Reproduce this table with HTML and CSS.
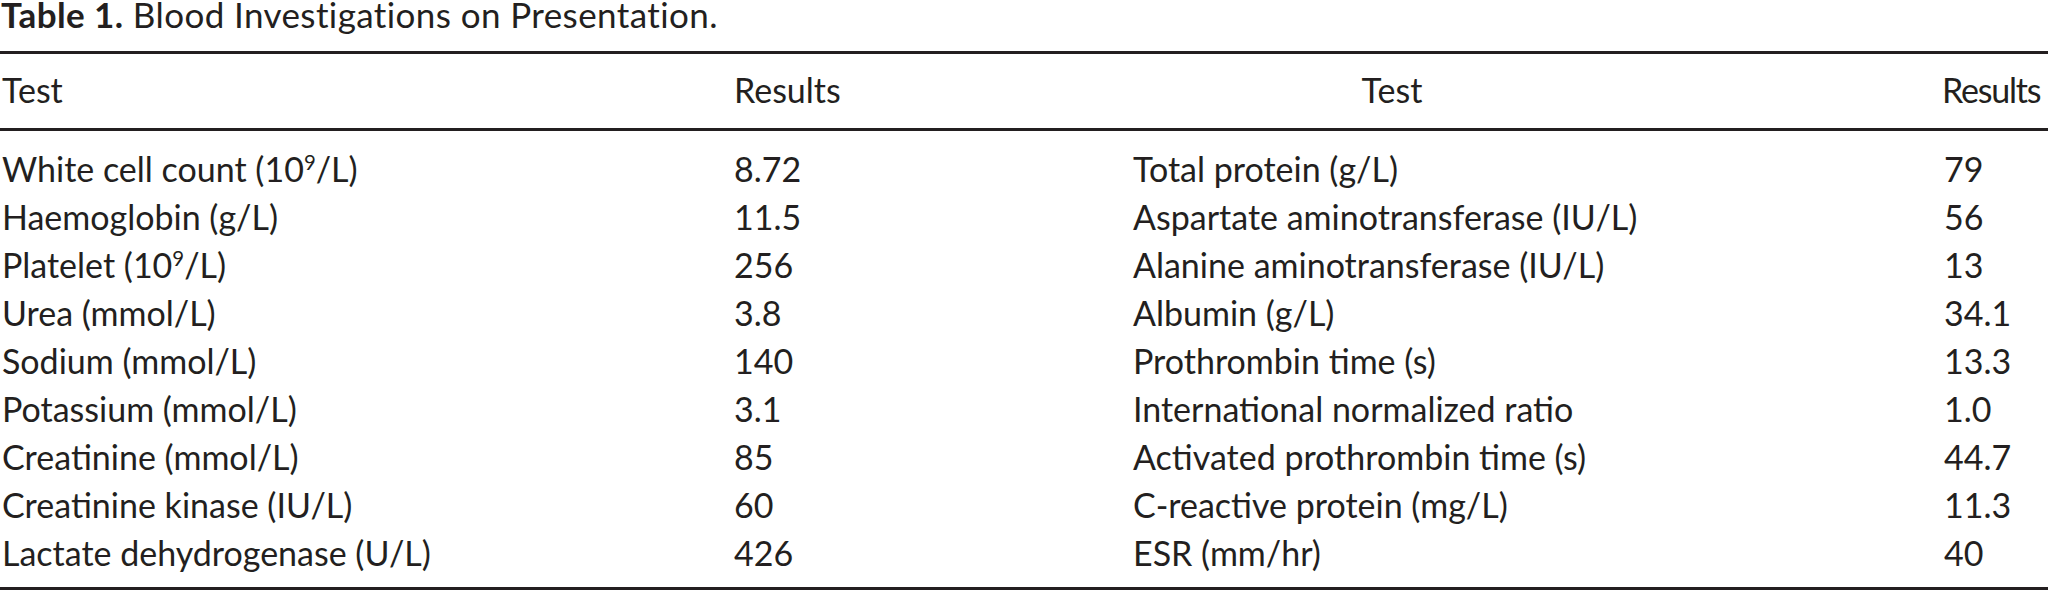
FILE: index.html
```html
<!DOCTYPE html>
<html lang="en">
<head>
<meta charset="utf-8">
<title>Table 1. Blood Investigations on Presentation.</title>
<link rel="stylesheet" href="styles.css">
</head>
<body>
<div class="page">
  <p class="caption"><b>Table 1.</b> Blood Investigations on Presentation.</p>
  <table class="labs">
    <colgroup>
      <col class="c-test1">
      <col class="c-res1">
      <col class="c-test2">
      <col class="c-res2">
    </colgroup>
    <thead>
      <tr>
        <th>Test</th>
        <th>Results</th>
        <th><span class="centered">Test</span></th>
        <th class="last-head">Results</th>
      </tr>
    </thead>
    <tbody>
      <tr><td>White cell count (10<sup>9</sup>/L)</td><td>8.72</td><td>Total protein (g/L)</td><td>79</td></tr>
      <tr><td>Haemoglobin (g/L)</td><td>11.5</td><td>Aspartate aminotransferase (IU/L)</td><td>56</td></tr>
      <tr><td>Platelet (10<sup>9</sup>/L)</td><td>256</td><td>Alanine aminotransferase (IU/L)</td><td>13</td></tr>
      <tr><td>Urea (mmol/L)</td><td>3.8</td><td>Albumin (g/L)</td><td>34.1</td></tr>
      <tr><td>Sodium (mmol/L)</td><td>140</td><td>Prothrombin time (s)</td><td>13.3</td></tr>
      <tr><td>Potassium (mmol/L)</td><td>3.1</td><td>International normalized ratio</td><td>1.0</td></tr>
      <tr><td>Creatinine (mmol/L)</td><td>85</td><td>Activated prothrombin time (s)</td><td>44.7</td></tr>
      <tr><td>Creatinine kinase (IU/L)</td><td>60</td><td>C-reactive protein (mg/L)</td><td>11.3</td></tr>
      <tr><td>Lactate dehydrogenase (U/L)</td><td>426</td><td>ESR (mm/hr)</td><td>40</td></tr>
    </tbody>
  </table>
</div>
</body>
</html>
```
FILE: styles.css
```css
html, body {
  margin: 0;
  padding: 0;
  background: #ffffff;
}
body {
  font-family: Lato, "Open Sans", sans-serif;
  color: #231f20;
  font-size: 34px;
}
.page {
  width: 2048px;
}
.caption {
  margin: 0 0 23px 0;
  padding-left: 1px;
  font-size: 35px;
  letter-spacing: 0.4px;
  line-height: 28px;
  white-space: nowrap;
}
.caption b {
  font-weight: 700;
}
.labs {
  width: 2048px;
  table-layout: fixed;
  border-collapse: collapse;
  border-top: 3px solid #231f20;
  border-bottom: 3px solid #231f20;
}
.c-test1 { width: 732px; }
.c-res1 { width: 399px; }
.c-test2 { width: 811px; }
.c-res2 { width: 106px; }
.labs th,
.labs td {
  padding: 0 0 0 2px;
  text-align: left;
  font-weight: 400;
  line-height: 48px;
  white-space: nowrap;
  vertical-align: top;
}
.labs thead th {
  padding-top: 12px;
  padding-bottom: 14px;
  border-bottom: 3px solid #231f20;
}
.labs thead th.last-head {
  padding-left: 0;
  letter-spacing: -1.2px;
}
.labs tbody tr:first-child td {
  padding-top: 14px;
}
.labs tbody tr:last-child td {
  padding-bottom: 10px;
}
.centered {
  display: inline-block;
  width: 518px;
  text-align: center;
}
.labs sup {
  font-size: 0.6em;
  line-height: 0;
  vertical-align: 0.6em;
}
```
